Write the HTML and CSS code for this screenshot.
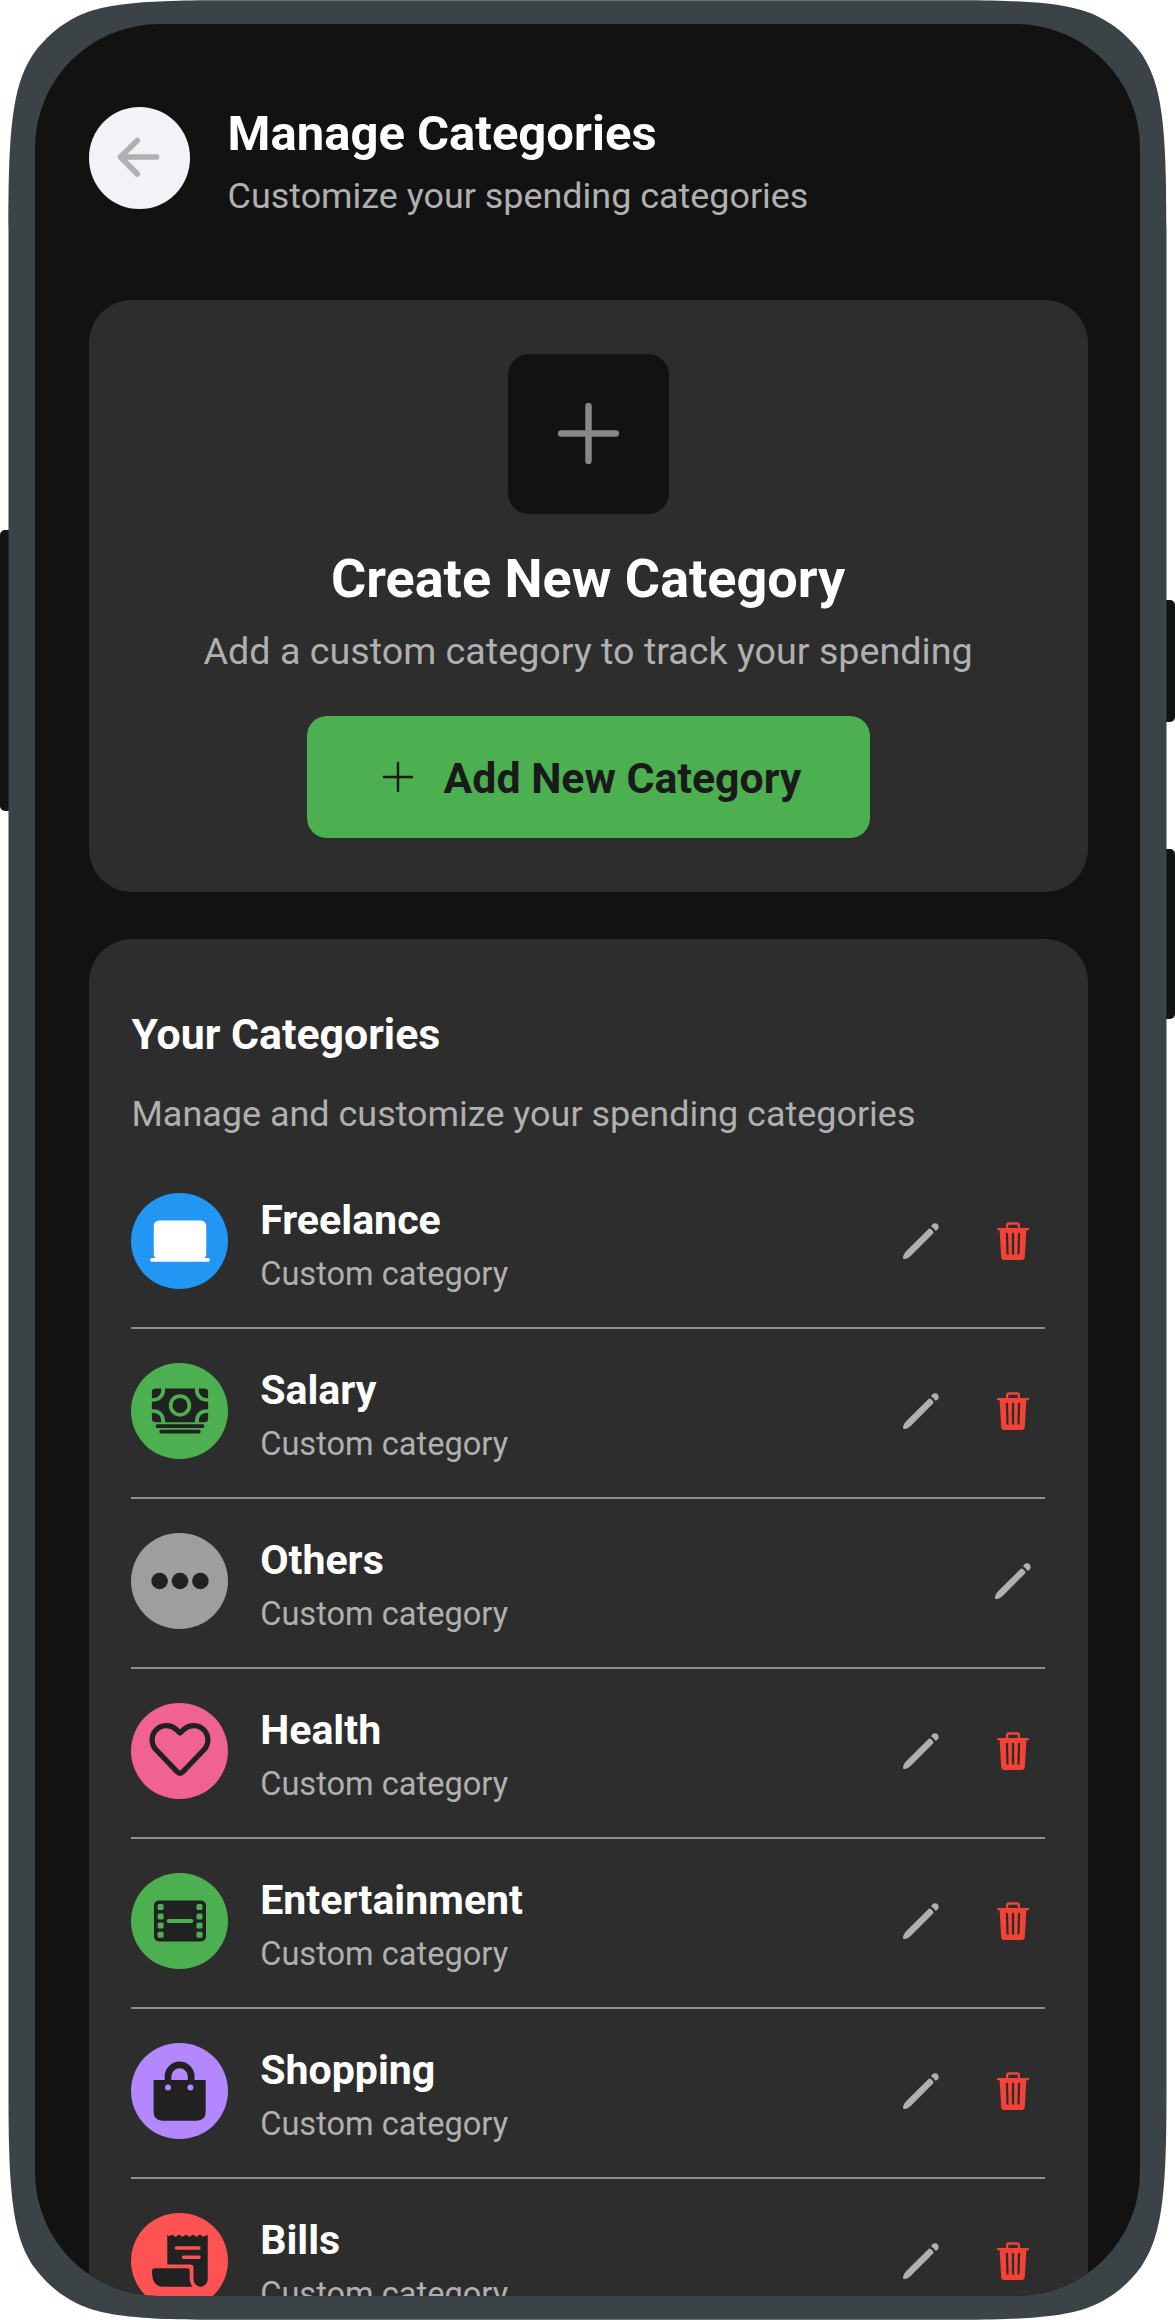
FILE: index.html
```
<!DOCTYPE html>
<html lang="en">
<head>
<meta charset="utf-8">
<title>Manage Categories</title>
<link rel="stylesheet" href="styles.css">
</head>
<body>
<svg width="0" height="0" class="defs">
  <symbol id="pencil" viewBox="-30 -30 60 60"><g transform="rotate(-45)"><path d="M14.6-3.2Q16.6 0 14.6 3.2H-17.5C-21 3.1-24.6 1.8-25 0C-24.6-1.8-21-3.1-17.5-3.2Z"/><path d="M17.4-3Q20-4.6 22.4-2.6Q24.6 0 22.4 2.6Q20 4.6 17.4 3Q18.2 0 17.4-3Z"/></g></symbol>
  <symbol id="trash" viewBox="-30 -30 60 60"><path d="M-5.9-12V-15.6Q-5.9-17.5-4-17.5H4Q5.9-17.5 5.9-15.6V-12" fill="none" stroke="currentColor" stroke-width="2.3"/><path d="M-15-11.8H15" stroke="currentColor" stroke-width="2.3" stroke-linecap="round"/><path fill-rule="evenodd" d="M-13.4-11.5H13.4L11.8 16Q11.5 19 8.6 19H-8.6Q-11.5 19-11.8 16ZM-7.2-7.2L-6.6 12.8Q-6.4 13.8-5.4 13.8Q-4.3 13.8-4.4 12.7L-4.9-7.2Q-5-8.2-6.1-8.2Q-7.2-8.2-7.2-7.2ZM-1.2-7.2V12.8Q-1.1 13.8 0 13.8Q1.1 13.8 1.2 12.8V-7.2Q1.1-8.2 0-8.2Q-1.1-8.2-1.2-7.2ZM7.2-7.2Q7.2-8.2 6.1-8.2Q5-8.2 4.9-7.2L4.4 12.7Q4.3 13.8 5.4 13.8Q6.4 13.8 6.6 12.8Z"/></symbol>
</svg>
<div class="stage">
  <svg class="frame" viewBox="0 0 1175 2320" aria-hidden="true">
    <rect class="key" x="0" y="530" width="20" height="281" rx="5"/>
    <rect class="key" x="1155" y="600" width="20" height="122" rx="5"/>
    <rect class="key" x="1155" y="849" width="20" height="170" rx="5"/>
    <path class="shell" d="M8.5 230C8.5 130 12 85 34 53C45 38 57 28 69 21C95 5 130 .5 214 .2H961C1045 .5 1080 5 1106 21C1118 28 1130 38 1141 53C1163 85 1166.500 130 1166.500 230V2090C1166.500 2190 1163 2235 1141 2267C1130 2282 1118 2292 1106 2299C1080 2315 1045 2319.500 961 2319.800H214C130 2319.500 95 2315 69 2299C57 2292 45 2282 34 2267C12 2235 8.500 2190 8.500 2090Z"/>
  </svg>
  <main class="screen">
    <header class="header">
      <button class="back" aria-label="Back"><svg viewBox="-30 -30 60 60"><path d="M17.500-1H-18M-1.700-17.500L-18.500-1L-1.700 16"/></svg></button>
      <div class="heading"><h1>Manage Categories</h1><p>Customize your spending categories</p></div>
    </header>
    <section class="card create">
      <div class="tile"><svg viewBox="-30.500 -30.500 61 61"><path d="M0-27.500V27.500M-27.500 0H27.500"/></svg></div>
      <h2>Create New Category</h2>
      <p>Add a custom category to track your spending</p>
      <button class="add"><svg viewBox="-16 -16 32 32"><path d="M0-14V14M-14 0H14"/></svg><span>Add New Category</span></button>
    </section>
    <section class="card list">
      <h3>Your Categories</h3>
      <p class="lead">Manage and customize your spending categories</p>
      <ul>
        <li><span class="badge blue"><svg viewBox="0 0 512 512"><path d="M496 400h-28.340A47.920 47.920 0 00480 368V128a48.050 48.050 0 00-48-48H80a48.050 48.050 0 00-48 48v240a47.920 47.920 0 0012.340 32H16a16 16 0 000 32h480a16 16 0 000-32z"/></svg></span><div class="info"><h4>Freelance</h4><p>Custom category</p></div><svg class="act edit"><use href="#pencil"/></svg><svg class="act del"><use href="#trash"/></svg></li>
        <li><span class="badge green"><svg viewBox="0 0 512 512"><path d="M448 400H64a16 16 0 010-32h384a16 16 0 010 32zM416 448H96a16 16 0 010-32h320a16 16 0 010 32zM32 272H16v48a32 32 0 0032 32h48v-16a64.070 64.070 0 00-64-64z"/><path d="M480 240h16v-64h-16a96.110 96.110 0 01-96-96V64H128v16a96.110 96.110 0 01-96 96H16v64h16a96.110 96.110 0 0196 96v16h256v-16a96.110 96.110 0 0196-96zm-224 64a96 96 0 1196-96 96.110 96.110 0 01-96 96z"/><circle cx="256" cy="208" r="64"/><path d="M416 336v16h48a32 32 0 0032-32v-48h-16a64.070 64.070 0 00-64 64zM480 144h16V96a32 32 0 00-32-32h-48v16a64.070 64.070 0 0064 64zM96 80V64H48a32 32 0 00-32 32v48h16a64.070 64.070 0 0064-64z"/></svg></span><div class="info"><h4>Salary</h4><p>Custom category</p></div><svg class="act edit"><use href="#pencil"/></svg><svg class="act del"><use href="#trash"/></svg></li>
        <li><span class="badge gray"><svg viewBox="-30 -30 60 60"><circle cx="-20.400" r="8.300"/><circle r="8.300"/><circle cx="20.400" r="8.300"/></svg></span><div class="info"><h4>Others</h4><p>Custom category</p></div><svg class="act edit"><use href="#pencil"/></svg></li>
        <li><span class="badge pink"><svg viewBox="-30 -30 60 60"><path class="line" d="M0-18L-4-21.700A14.200 14.200 0 0 0-23.200-.500L-3 20.600Q0 23.600 3 20.600L23.200-.500A14.200 14.200 0 0 0 4-21.700Z"/></svg></span><div class="info"><h4>Health</h4><p>Custom category</p></div><svg class="act edit"><use href="#pencil"/></svg><svg class="act del"><use href="#trash"/></svg></li>
        <li><span class="badge green"><svg viewBox="-30 -30 60 60"><rect x="-26" y="-20.500" width="52" height="41" rx="5"/><g class="hole"><rect x="-22.400" y="-16.900" width="6" height="6" rx="1.500"/><rect x="-22.400" y="-7.600" width="6" height="6" rx="1.500"/><rect x="-22.400" y="1.600" width="6" height="6" rx="1.500"/><rect x="-22.400" y="10.800" width="6" height="6" rx="1.500"/><rect x="16.500" y="-16.900" width="6" height="6" rx="1.500"/><rect x="16.500" y="-7.600" width="6" height="6" rx="1.500"/><rect x="16.500" y="1.600" width="6" height="6" rx="1.500"/><rect x="16.500" y="10.800" width="6" height="6" rx="1.500"/><rect x="-13.300" y="-1.900" width="26.600" height="3.800" rx="1.900"/></g></svg></span><div class="info"><h4>Entertainment</h4><p>Custom category</p></div><svg class="act edit"><use href="#pencil"/></svg><svg class="act del"><use href="#trash"/></svg></li>
        <li><span class="badge purple"><svg viewBox="-30 -30 60 60"><path d="M-26.400-11H25.700V20.500Q25.700 29.700 16.500 29.700H-17.200Q-26.400 29.700-26.400 20.500Z"/><path class="handle" d="M-12-10V-14.500A11.600 11.600 0 0 1 11.200-14.500V-10"/><g class="hole"><circle cx="-12" cy="-3.500" r="3"/><circle cx="10.400" cy="-3.500" r="3"/></g></svg></span><div class="info"><h4>Shopping</h4><p>Custom category</p></div><svg class="act edit"><use href="#pencil"/></svg><svg class="act del"><use href="#trash"/></svg></li>
        <li><span class="badge red"><svg viewBox="-30 -30 60 60"><path d="M-12.700-26.300Q-11.400-24.800-10-25Q-7.800-27.500-6-25Q-4.500-23.800-3-25Q-1.200-27.500 1-25Q2.500-23.800 4-25Q5.800-27.500 8-25Q9.500-23.800 11-25Q12.800-27.500 15-25Q16.500-23.800 18-25Q19.800-27.500 22-25Q23.500-23.800 24.800-25L27.700-26.300V18.600A7.100 7.100 0 0 1 13.500 18.600V6.700Q13.500 3.500 10.300 3.500H-12.700Z"/><path d="M-25 7.300H7.800Q9.700 7.300 9.700 9.300V17Q9.700 22.500 12.600 25.700H-17C-25 25.700-28 20-28 10.300Q-28 7.300-25 7.300Z"/><path class="rule" d="M-3.600-13H19M3.500-3.700H19"/></svg></span><div class="info"><h4>Bills</h4><p>Custom category</p></div><svg class="act edit"><use href="#pencil"/></svg><svg class="act del"><use href="#trash"/></svg></li>
      </ul>
    </section>
  </main>
</div>
</body>
</html>
```
FILE: styles.css
```
* { box-sizing: border-box; margin: 0; padding: 0; }
body { background: #fff; font-family: Roboto, "Liberation Sans", sans-serif; }
svg { display: block; }
.defs { position: absolute; }
.stage { position: relative; width: 1175px; height: 2320px; padding: 24px 35px; overflow: hidden; }
.frame { position: absolute; inset: 0; width: 1175px; height: 2320px; }
.key { fill: #101414; }
.shell { fill: #3b4346; }
.screen { position: relative; width: 1105px; height: 2272px; padding: 0 52.400px 0 53.600px; overflow: hidden; border-radius: 124px; background: #121212; }
.header { display: flex; gap: 37.500px; height: 276px; padding-top: 81px; }
.back { display: flex; flex: none; align-items: center; justify-content: center; width: 101.500px; height: 102px; margin-top: 2.400px; border: 0; border-radius: 50%; background: #f2f3f7; }
.back svg { width: 60px; height: 60px; fill: none; stroke: #b0b0b0; stroke-width: 5.700px; stroke-linecap: round; stroke-linejoin: round; }
p { color: #b0b0b0; white-space: nowrap; }
h1, h2, h3, h4 { color: #fff; font-weight: 700; white-space: nowrap; }
h1 { font-size: 49px; line-height: 58px; }
.heading p { margin-top: 11px; font-size: 35.900px; line-height: 44px; }
.card { border-radius: 43px; background: #2d2d2d; }
.create { display: flex; flex-direction: column; align-items: center; height: 592.300px; padding-top: 53.600px; }
.tile { display: flex; align-items: center; justify-content: center; width: 161px; height: 160px; border-radius: 21px; background: #121212; }
.tile svg { width: 61px; height: 61px; stroke: #888; stroke-width: 6.500px; stroke-linecap: round; }
.create h2 { margin-top: 33px; font-size: 54px; line-height: 64px; }
.create p { margin-top: 17.300px; font-size: 37.700px; line-height: 46px; }
.add { display: flex; align-items: center; gap: 30px; width: 563px; height: 122px; margin-top: 42px; padding-left: 75px; border: 0; border-radius: 20px; background: #4caf50; color: #1a1a1a; font: 700 42.800px/50px Roboto, "Liberation Sans", sans-serif; white-space: nowrap; }
.add span { padding-top: 1.500px; }
.add svg { width: 32px; height: 32px; stroke: #1a1a1a; stroke-width: 2.400px; stroke-linecap: round; }
.list { height: 1600px; margin-top: 47px; padding: 69.500px 42.900px 0 42.900px; }
.list h3 { font-size: 42.800px; line-height: 50px; }
.lead { margin-top: 33px; font-size: 35.950px; line-height: 44px; }
ul { margin-top: 23.200px; list-style: none; }
li { display: flex; height: 169.950px; padding-top: 34px; border-bottom: 2px solid #8f8f8f; }
.badge { display: flex; flex: none; align-items: center; justify-content: center; width: 96.400px; height: 96.400px; border-radius: 50%; color: #212121; }
.badge svg { width: 60px; height: 60px; fill: currentColor; overflow: visible; }
.blue { background: #2196f3; color: #fff; }
.green { background: #4caf50; }
.gray { background: #9e9e9e; }
.pink { background: #f06292; }
.purple { background: #b388ff; }
.red { background: #ff5252; }
.line { fill: none; stroke: #212121; stroke-width: 5.300px; stroke-linejoin: round; }
.handle { fill: none; stroke: #212121; stroke-width: 6.700px; }
.hole { fill: #4caf50; }
.purple .hole { fill: #b388ff; }
.rule { stroke: #ff5252; stroke-width: 3.500px; stroke-linecap: round; }
.info { flex: 1; margin-left: 32.300px; padding-top: 2.900px; }
.info h4 { font-size: 41.100px; line-height: 48px; }
.info p { margin-top: 11.500px; font-size: 32.600px; line-height: 38px; }
.act { flex: none; width: 60px; height: 60px; margin: 18px 2px 0 0; overflow: visible; }
.edit { fill: #b0b0b0; }
.del { margin-left: 30px; fill: #f44336; color: #f44336; }
```
